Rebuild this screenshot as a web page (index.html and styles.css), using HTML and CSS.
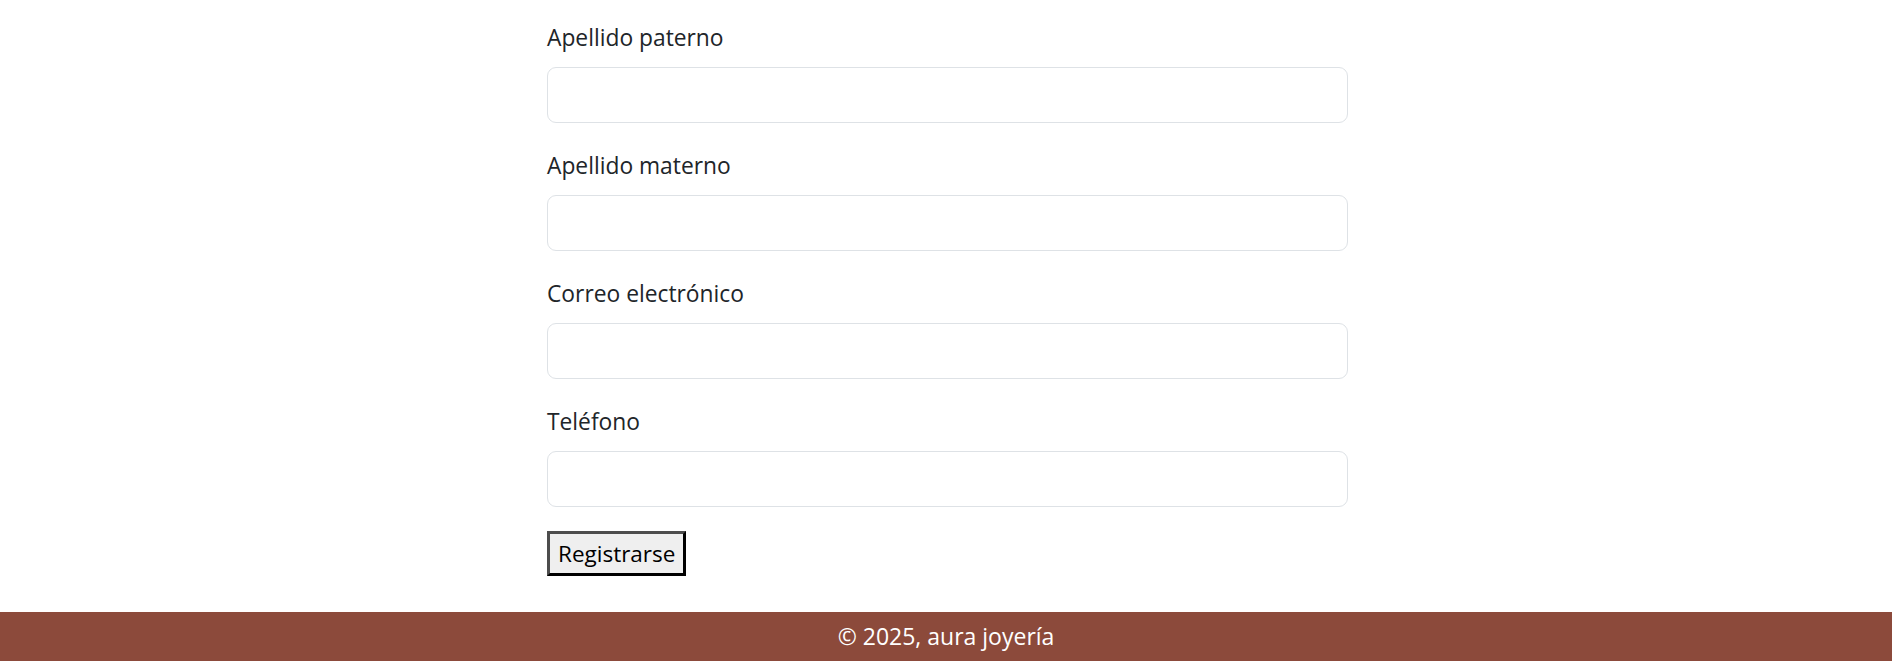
FILE: index.html
```html
<!DOCTYPE html>
<html lang="es">
<head>
<meta charset="utf-8">
<title>Registro - aura joyería</title>
<link rel="stylesheet" href="styles.css">
</head>
<body>
<main class="page">
  <form class="form">
    <div class="group">
      <label class="label" for="ap">Apellido paterno</label>
      <input class="input" id="ap" type="text">
    </div>
    <div class="group">
      <label class="label" for="am">Apellido materno</label>
      <input class="input" id="am" type="text">
    </div>
    <div class="group">
      <label class="label" for="em">Correo electrónico</label>
      <input class="input" id="em" type="email">
    </div>
    <div class="group">
      <label class="label" for="tel">Teléfono</label>
      <input class="input" id="tel" type="tel">
    </div>
    <button class="submit" type="submit">Registrarse</button>
  </form>
</main>
<footer class="footer">© 2025, aura joyería</footer>
</body>
</html>
```

FILE: styles.css
```css
html, body {
  margin: 0;
  padding: 0;
  background: #ffffff;
}

body {
  font-family: "Open Sans", "Noto Sans", sans-serif;
  color: #212529;
}

.page {
  display: flex;
  justify-content: center;
  padding-top: 19px;
  padding-bottom: 36px;
}

.form {
  box-sizing: border-box;
  width: 804px;
  padding-left: 3px;
  display: flex;
  flex-direction: column;
  align-items: flex-start;
}

.group {
  width: 100%;
  margin-bottom: 24px;
}

.label {
  display: block;
  font-size: 22.8px;
  line-height: 36px;
  padding-top: 1px;
  margin-bottom: 11px;
  color: #212529;
}

.input {
  display: block;
  box-sizing: border-box;
  width: 100%;
  height: 56px;
  border: 1px solid #dee2e6;
  border-radius: 9px;
  background: #ffffff;
  padding: 0 18px;
  font-family: inherit;
  font-size: 23px;
  outline: none;
}

.submit {
  box-sizing: border-box;
  height: 45px;
  padding: 0 8px;
  border-width: 3px;
  border-style: solid;
  border-color: #4d4d4d #000000 #000000 #4d4d4d;
  background: #efefef;
  color: #000000;
  font-family: inherit;
  font-size: 22.5px;
  line-height: 36px;
  border-radius: 0;
}

.footer {
  height: 49px;
  line-height: 49px;
  background: #8c4a3b;
  color: #ffffff;
  text-align: center;
  font-size: 23px;
}
```
